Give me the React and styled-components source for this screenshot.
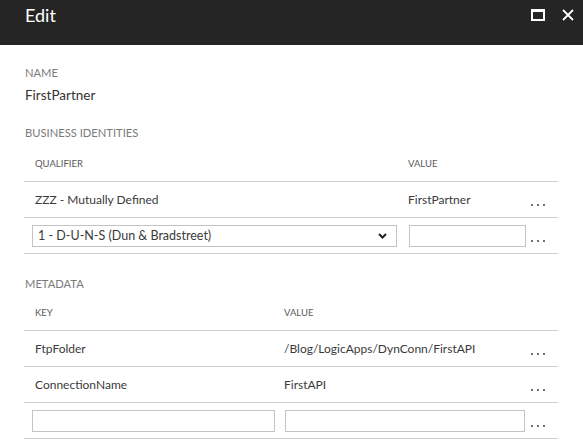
import React from 'react';
import styled, { createGlobalStyle } from 'styled-components';

const GlobalStyle = createGlobalStyle`
  body {
    margin: 0;
    background: #ffffff;
    font-family: "Segoe UI", Lato, "Liberation Sans", sans-serif;
    color: #333333;
  }
`;

const Blade = styled.div`
  width: 583px;
  height: 440px;
  overflow: hidden;
  background: #ffffff;
`;

const Header = styled.div`
  height: 45px;
  box-sizing: border-box;
  background: #252525;
  display: flex;
  align-items: flex-start;
  justify-content: space-between;
  padding: 4px 9px 0 25px;
`;

const Title = styled.h1`
  margin: 0;
  font-size: 18px;
  font-weight: 400;
  line-height: 22px;
  color: #ffffff;
`;

const HeaderIcons = styled.div`
  display: flex;
  align-items: center;
  gap: 17px;
  padding-top: 5px;
`;

const MaximizeIcon = styled.span`
  display: block;
  width: 14px;
  height: 12px;
  box-sizing: border-box;
  border: 2px solid #ffffff;
  border-top-width: 3px;
`;

const Body = styled.div`
  padding: 20px 25px 0 24px;
`;

const FieldLabel = styled.div`
  font-size: 11.2px;
  line-height: 16px;
  color: #7a7a7a;
  text-transform: uppercase;
  padding-left: 1px;
  margin-top: ${(p) => p.$top ?? 0}px;
`;

const FieldValue = styled.div`
  font-size: 13.5px;
  line-height: 20px;
  color: #333333;
  margin-top: 4px;
  padding-left: 1px;
`;

const Table = styled.div`
  display: grid;
  grid-template-columns: ${(p) => p.$cols};
  margin-top: ${(p) => p.$top ?? 4}px;
`;

const HeadCell = styled.div`
  height: 36px;
  display: flex;
  align-items: center;
  padding-left: ${(p) => p.$pad ?? 11}px;
  font-size: 9.5px;
  color: #595959;
  text-transform: uppercase;
  border-bottom: 1px solid #d0d0d0;
`;

const Cell = styled.div`
  height: 36px;
  box-sizing: border-box;
  display: flex;
  align-items: center;
  padding: 0 ${(p) => p.$right ?? 0}px 0 ${(p) => p.$left ?? 8}px;
  font-size: 12px;
  color: #3a3a3a;
  border-bottom: 1px solid #d0d0d0;
  min-width: 0;
`;

const CellText = styled.span`
  padding-left: ${(p) => p.$pad ?? 3}px;
  white-space: nowrap;
`;

const TextBox = styled.div`
  flex: 1;
  height: 22px;
  box-sizing: border-box;
  border: 1px solid #c4c4c4;
  background: #ffffff;
`;

const SelectBox = styled.div`
  flex: 1;
  height: 22px;
  box-sizing: border-box;
  border: 1px solid #c4c4c4;
  display: flex;
  align-items: center;
  justify-content: space-between;
  padding: 0 9px 0 5px;
  font-size: 12.5px;
  color: #3a3a3a;
`;

const Dots = styled.div`
  display: flex;
  gap: 4px;
  padding-top: 10px;
  span {
    width: 2px;
    height: 2px;
    background: #707070;
  }
`;

const Ellipsis = () => (
  <Cell $left={0}>
    <Dots>
      <span />
      <span />
      <span />
    </Dots>
  </Cell>
);

const identities = [{ qualifier: 'ZZZ - Mutually Defined', value: 'FirstPartner' }];

const metadata = [
  { key: 'FtpFolder', value: '/Blog/LogicApps/DynConn/FirstAPI' },
  { key: 'ConnectionName', value: 'FirstAPI' },
];

export default function App() {
  return (
    <>
      <GlobalStyle />
      <Blade>
        <Header>
          <Title>Edit</Title>
          <HeaderIcons>
            <MaximizeIcon />
            <svg width="12" height="12" viewBox="0 0 12 12">
              <path d="M1 1 L11 11 M11 1 L1 11" stroke="#ffffff" strokeWidth="1.8" />
            </svg>
          </HeaderIcons>
        </Header>
        <Body>
          <FieldLabel>Name</FieldLabel>
          <FieldValue>FirstPartner</FieldValue>

          <FieldLabel $top={20}>Business Identities</FieldLabel>
          <Table $cols="377px 130px 27px">
            <HeadCell>Qualifier</HeadCell>
            <HeadCell $pad={7}>Value</HeadCell>
            <HeadCell />
            {identities.map((row) => (
              <React.Fragment key={row.qualifier}>
                <Cell>
                  <CellText>{row.qualifier}</CellText>
                </Cell>
                <Cell $left={7}>
                  <CellText $pad={0}>{row.value}</CellText>
                </Cell>
                <Ellipsis />
              </React.Fragment>
            ))}
            <Cell $right={4}>
              <SelectBox>
                <span>1 - D-U-N-S (Dun &amp; Bradstreet)</span>
                <svg width="9" height="6" viewBox="0 0 9 6">
                  <path d="M1 1 L4.5 4.5 L8 1" fill="none" stroke="#222" strokeWidth="2" />
                </svg>
              </SelectBox>
            </Cell>
            <Cell $left={8} $right={5}>
              <TextBox />
            </Cell>
            <Ellipsis />
          </Table>

          <FieldLabel $top={22}>Metadata</FieldLabel>
          <Table $cols="253px 254px 27px" $top={2}>
            <HeadCell>Key</HeadCell>
            <HeadCell $pad={7}>Value</HeadCell>
            <HeadCell />
            {metadata.map((row) => (
              <React.Fragment key={row.key}>
                <Cell>
                  <CellText>{row.key}</CellText>
                </Cell>
                <Cell $left={7}>
                  <CellText $pad={0}>{row.value}</CellText>
                </Cell>
                <Ellipsis />
              </React.Fragment>
            ))}
            <Cell $right={2}>
              <TextBox />
            </Cell>
            <Cell $right={6}>
              <TextBox />
            </Cell>
            <Ellipsis />
          </Table>
        </Body>
      </Blade>
    </>
  );
}
